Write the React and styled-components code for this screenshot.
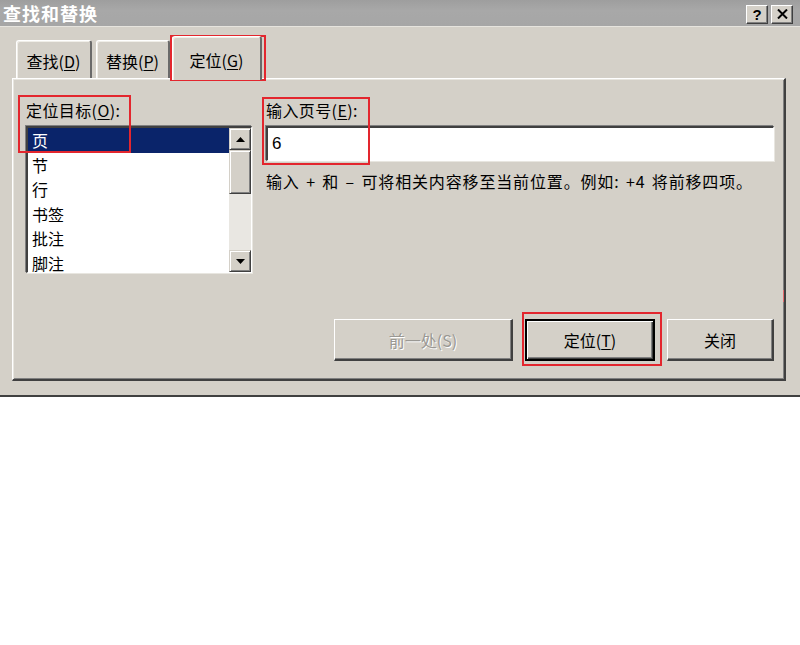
import React from "react";
import styled, { createGlobalStyle } from "styled-components";

const Global = createGlobalStyle`
  html, body { margin: 0; padding: 0; background: #ffffff; }
  body { font-family: "Noto Sans CJK SC", "Noto Sans", sans-serif; }
  * { box-sizing: border-box; }
`;

const FONT = `"Noto Sans CJK SC", "Liberation Sans", sans-serif`;

const Window = styled.div`
  position: relative;
  width: 800px;
  height: 397px;
  display: flex;
  flex-direction: column;
  background: #d4d0c8;
  border-bottom: 2px solid #404040;
  font-family: ${FONT};
  font-size: 16px;
  color: #000;
`;

const TitleBar = styled.div`
  height: 27px;
  flex: none;
  display: flex;
  align-items: center;
  justify-content: space-between;
  padding: 0 7px 0 3px;
  background: linear-gradient(#9e9e9e, #a8a8a8 40%, #a6a6a6);
  border-bottom: 1px solid #e6e4de;
`;

const Title = styled.span`
  color: #ffffff;
  font-weight: 700;
  font-size: 18px;
  letter-spacing: 1px;
  line-height: 1;
`;

const TitleButtons = styled.div`
  display: flex;
  gap: 3px;
  margin-top: 2px;
`;

const TitleButton = styled.div`
  width: 22px;
  height: 19px;
  display: flex;
  align-items: center;
  justify-content: center;
  background: #d4d0c8;
  border-top: 1px solid #ffffff;
  border-left: 1px solid #ffffff;
  border-right: 1px solid #404040;
  border-bottom: 1px solid #404040;
  box-shadow: inset -1px -1px 0 #808080;
  font-family: "Liberation Sans", sans-serif;
  font-weight: 700;
  font-size: 15px;
  line-height: 1;
`;

const Body = styled.div`
  flex: 1;
  display: flex;
  flex-direction: column;
  padding: 9px 14px 14px 12px;
`;

const TabRow = styled.div`
  display: flex;
  align-items: flex-end;
  padding-left: 4px;
  height: 44px;
  flex: none;
  position: relative;
  z-index: 1;
  margin-bottom: -2px;
`;

const Tab = styled.div`
  width: ${(p) => p.$w}px;
  margin-left: ${(p) => p.$ml || 0}px;
  height: ${(p) => (p.$active ? 44 : 38)}px;
  margin-bottom: ${(p) => (p.$active ? 0 : 2)}px;
  display: flex;
  align-items: center;
  justify-content: center;
  padding-top: ${(p) => (p.$active ? 2 : 2)}px;
  background: #d4d0c8;
  border-top: 1px solid #ffffff;
  border-left: 1px solid #ffffff;
  border-right: 2px solid #6a6a6a;
  border-top-left-radius: 3px;
  border-top-right-radius: 3px;
  box-shadow: inset 1px 1px 0 #f0eee8;
  line-height: 1;
`;

const U = styled.span`
  text-decoration: underline;
  text-underline-offset: 2px;
`;

const Panel = styled.div`
  flex: 1;
  display: flex;
  flex-direction: column;
  border-top: 1px solid #ffffff;
  border-left: 1px solid #ffffff;
  border-right: 2px solid #404040;
  border-bottom: 2px solid #404040;
  box-shadow: inset 1px 1px 0 #e8e6e0, inset -1px -1px 0 #808080;
  padding: 21px 10px 18px 13px;
`;

const TopRow = styled.div`
  display: flex;
  gap: 14px;
`;

const LeftCol = styled.div`
  width: 226px;
  display: flex;
  flex-direction: column;
`;

const RightCol = styled.div`
  flex: 1;
  display: flex;
  flex-direction: column;
`;

const Label = styled.div`
  height: 20px;
  line-height: 20px;
  margin-bottom: 6px;
  white-space: nowrap;
  letter-spacing: 0.4px;
`;

const ListBox = styled.div`
  height: 147px;
  display: flex;
  background: #ffffff;
  border-top: 2px solid #404040;
  border-left: 2px solid #404040;
  border-right: 1px solid #ffffff;
  border-bottom: 1px solid #ffffff;
  box-shadow: -1px -1px 0 #808080, 1px 1px 0 #e8e6e0;
`;

const Items = styled.div`
  flex: 1;
  display: flex;
  flex-direction: column;
`;

const Item = styled.div`
  height: 24.5px;
  line-height: 24.5px;
  padding-left: 4px;
  background: ${(p) => (p.$selected ? "#0a246a" : "transparent")};
  color: ${(p) => (p.$selected ? "#ffffff" : "#000000")};
`;

const ScrollBar = styled.div`
  width: 22px;
  display: flex;
  flex-direction: column;
  background: #e9e7e2;
`;

const ScrollPart = styled.div`
  height: ${(p) => p.$h}px;
  flex: none;
  display: flex;
  align-items: center;
  justify-content: center;
  background: #d4d0c8;
  border-top: 1px solid #d4d0c8;
  border-left: 1px solid #d4d0c8;
  border-right: 1px solid #404040;
  border-bottom: 1px solid #404040;
  box-shadow: inset 1px 1px 0 #ffffff, inset -1px -1px 0 #808080;
`;

const Spacer = styled.div`
  flex: 1;
`;

const InputBox = styled.div`
  height: 35px;
  display: flex;
  align-items: center;
  padding-left: 4px;
  background: #ffffff;
  border-top: 2px solid #404040;
  border-left: 2px solid #404040;
  border-right: 1px solid #ffffff;
  border-bottom: 1px solid #ffffff;
  box-shadow: -1px -1px 0 #808080, 1px 1px 0 #e8e6e0;
  font-family: "Liberation Sans", sans-serif;
  font-size: 17px;
`;

const Help = styled.div`
  margin-top: 10px;
  line-height: 20px;
  white-space: nowrap;
  letter-spacing: 0.85px;
  word-spacing: 2px;
`;

const ButtonRow = styled.div`
  margin-top: auto;
  display: flex;
  justify-content: flex-end;
  gap: 12px;
`;

const Button = styled.div`
  width: ${(p) => p.$w}px;
  height: 42px;
  display: flex;
  align-items: center;
  justify-content: center;
  background: #d4d0c8;
  border-top: 1px solid #ffffff;
  border-left: 1px solid #ffffff;
  border-right: 2px solid #404040;
  border-bottom: 2px solid #404040;
  box-shadow: inset -1px -1px 0 #808080;
  color: ${(p) => (p.$disabled ? "#9a9893" : "#000")};
  text-shadow: ${(p) => (p.$disabled ? "1px 1px 0 #ffffff" : "none")};
  ${(p) =>
    p.$default &&
    `
    border: 2px solid #000;
    box-shadow: inset 1px 1px 0 #ffffff, inset -1px -1px 0 #404040, inset -2px -2px 0 #808080;
  `}
`;

const Mark = styled.div`
  position: absolute;
  left: ${(p) => p.$x}px;
  top: ${(p) => p.$y}px;
  width: ${(p) => p.$w}px;
  height: ${(p) => p.$h}px;
  border: 2px solid #e3262e;
  pointer-events: none;
`;

const Tick = styled.div`
  position: absolute;
  left: 783px;
  top: 290px;
  width: 1px;
  height: 12px;
  background: #e46a6e;
`;

const Arrow = ({ up }) => (
  <svg width="9" height="5" viewBox="0 0 9 5">
    <polygon points={up ? "4.5,0 9,5 0,5" : "0,0 9,0 4.5,5"} fill="#000" />
  </svg>
);

const items = ["页", "节", "行", "书签", "批注", "脚注"];

export default function App() {
  return (
    <>
      <Global />
      <Window>
        <TitleBar>
          <Title>查找和替换</Title>
          <TitleButtons>
            <TitleButton>?</TitleButton>
            <TitleButton>
              <svg width="11" height="10" viewBox="0 0 11 10">
                <path d="M1 0.5 L10 9.5 M10 0.5 L1 9.5" stroke="#000" strokeWidth="2" />
              </svg>
            </TitleButton>
          </TitleButtons>
        </TitleBar>
        <Body>
          <TabRow>
            <Tab $w={76}>
              查找(<U>D</U>)
            </Tab>
            <Tab $w={74} $ml={4}>
              替换(<U>P</U>)
            </Tab>
            <Tab $w={90} $ml={2} $active>
              定位(<U>G</U>)
            </Tab>
          </TabRow>
          <Panel>
            <TopRow>
              <LeftCol>
                <Label>
                  定位目标(<U>O</U>):
                </Label>
                <ListBox>
                  <Items>
                    {items.map((t, i) => (
                      <Item key={t} $selected={i === 0}>
                        {t}
                      </Item>
                    ))}
                  </Items>
                  <ScrollBar>
                    <ScrollPart $h={22}>
                      <Arrow up />
                    </ScrollPart>
                    <ScrollPart $h={44} />
                    <Spacer />
                    <ScrollPart $h={22}>
                      <Arrow />
                    </ScrollPart>
                  </ScrollBar>
                </ListBox>
              </LeftCol>
              <RightCol>
                <Label>
                  输入页号(<U>E</U>):
                </Label>
                <InputBox>6</InputBox>
                <Help>输入 + 和 – 可将相关内容移至当前位置。例如: +4 将前移四项。</Help>
              </RightCol>
            </TopRow>
            <ButtonRow>
              <Button $w={179} $disabled>
                前一处(S)
              </Button>
              <Button $w={130} $default>
                定位(<U>T</U>)
              </Button>
              <Button $w={107}>关闭</Button>
            </ButtonRow>
          </Panel>
        </Body>
        <Mark $x={170} $y={35} $w={96} $h={46} />
        <Mark $x={18} $y={95} $w={113} $h={58} />
        <Mark $x={262} $y={97} $w={108} $h={68} />
        <Mark $x={522} $y={312} $w={140} $h={54} />
        <Tick />
      </Window>
    </>
  );
}
